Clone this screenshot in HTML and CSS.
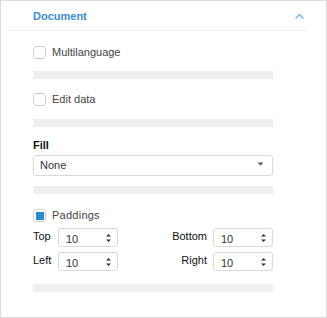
FILE: index.html
```html
<!DOCTYPE html>
<html lang="en">
<head>
    <meta charset="UTF-8" />
    <title>Document settings</title>
    <link rel="stylesheet" href="styles.css">
</head>
<body>
    <div class="panel">
        <div class="header">
            <span class="title">Document</span>
            <svg class="chevron" width="11" height="7" viewBox="0 0 11 7">
                <polyline points="1.5,5.5 5.5,1.5 9.5,5.5" fill="none" stroke="#6aaee3" stroke-width="1.1"/>
            </svg>
        </div>

        <div class="content">
            <label class="check first">
                <span class="box"></span>
                <span class="check-label">Multilanguage</span>
            </label>
            <div class="sep sep-1"></div>

            <label class="check second">
                <span class="box"></span>
                <span class="check-label">Edit data</span>
            </label>
            <div class="sep sep-2"></div>

            <div class="field-label">Fill</div>
            <div class="select">
                <span class="select-value">None</span>
                <svg width="7" height="4" viewBox="0 0 7 4">
                    <polygon points="0.5,0.5 6.5,0.5 3.5,3.5" fill="#555"/>
                </svg>
            </div>
            <div class="sep sep-3"></div>

            <label class="check third">
                <span class="box checked"><span class="mark"></span></span>
                <span class="check-label wide">Paddings</span>
            </label>

            <div class="spin-row row-1">
                <div class="spin-group">
                    <span class="spin-label left">Top</span>
                    <div class="spin"><span>10</span>
                        <svg width="7" height="12" viewBox="0 0 7 12">
                            <polygon points="1,4.5 3.5,2 6,4.5" fill="#333"/>
                            <polygon points="1,7.5 3.5,10 6,7.5" fill="#333"/>
                        </svg>
                    </div>
                </div>
                <div class="spin-group">
                    <span class="spin-label right">Bottom</span>
                    <div class="spin"><span>10</span>
                        <svg width="7" height="12" viewBox="0 0 7 12">
                            <polygon points="1,4.5 3.5,2 6,4.5" fill="#333"/>
                            <polygon points="1,7.5 3.5,10 6,7.5" fill="#333"/>
                        </svg>
                    </div>
                </div>
            </div>

            <div class="spin-row row-2">
                <div class="spin-group">
                    <span class="spin-label left">Left</span>
                    <div class="spin"><span>10</span>
                        <svg width="7" height="12" viewBox="0 0 7 12">
                            <polygon points="1,4.5 3.5,2 6,4.5" fill="#333"/>
                            <polygon points="1,7.5 3.5,10 6,7.5" fill="#333"/>
                        </svg>
                    </div>
                </div>
                <div class="spin-group">
                    <span class="spin-label right">Right</span>
                    <div class="spin"><span>10</span>
                        <svg width="7" height="12" viewBox="0 0 7 12">
                            <polygon points="1,4.5 3.5,2 6,4.5" fill="#333"/>
                            <polygon points="1,7.5 3.5,10 6,7.5" fill="#333"/>
                        </svg>
                    </div>
                </div>
            </div>
            <div class="sep sep-4"></div>
        </div>
    </div>
</body>
</html>
```

FILE: styles.css
```css
body {
    margin: 0;
    font-family: "Liberation Sans", Arial, sans-serif;
    font-size: 11px;
    color: #444;
    background: #fff;
}

.panel {
    width: 327px;
    height: 318px;
    box-sizing: border-box;
    border: 1px solid #dcdcdc;
}

.header {
    display: flex;
    align-items: center;
    justify-content: space-between;
    box-sizing: border-box;
    height: 30px;
    width: 298px;
    margin-left: 7px;
    padding-left: 25px;
    padding-right: 1px;
    border-bottom: 1px solid #ededed;
}

.title {
    color: #3a8dd3;
    font-weight: bold;
    font-size: 11px;
}

.chevron {
    margin-top: 1px;
}

.content {
    padding-left: 32px;
    width: 240px;
}

.check {
    display: flex;
    align-items: center;
    height: 13px;
    gap: 6px;
}

.check.first { margin-top: 15px; }
.check.second { margin-top: 14px; }
.check.third { margin-top: 15px; }

.box {
    width: 13px;
    height: 13px;
    box-sizing: border-box;
    border: 1px solid #cfcfcf;
    border-radius: 3px;
    display: flex;
    align-items: center;
    justify-content: center;
}

.mark {
    width: 8px;
    height: 8px;
    background: #2a8bd0;
}

.check-label {
    line-height: 13px;
}

.check-label.wide {
    letter-spacing: 0.25px;
}

.sep {
    height: 8px;
    background: #efefef;
}

.sep-1 { margin-top: 12px; }
.sep-2 { margin-top: 13px; }
.sep-3 { margin-top: 10px; }
.sep-4 { margin-top: 13px; }

.field-label {
    margin-top: 12px;
    line-height: 13px;
    font-weight: bold;
    color: #111;
}

.select {
    margin-top: 3px;
    height: 21px;
    box-sizing: border-box;
    border: 1px solid #d9d9d9;
    border-radius: 3px;
    display: flex;
    align-items: center;
    justify-content: space-between;
    padding: 0 8px 1px 6px;
    color: #333;
}

.select svg {
    margin-top: -2px;
}

.spin-row {
    display: flex;
    justify-content: space-between;
    height: 19px;
}

.row-1 { margin-top: 6px; }
.row-2 { margin-top: 5px; }

.spin-group {
    display: flex;
    align-items: center;
    gap: 6px;
}

.spin-label {
    color: #111;
    margin-top: -3px;
}

.spin-label.left {
    width: 19px;
}

.spin {
    width: 60px;
    height: 19px;
    box-sizing: border-box;
    border: 1px solid #d9d9d9;
    border-radius: 3px;
    display: flex;
    align-items: center;
    justify-content: space-between;
    padding: 2px 5px 0 7px;
    color: #333;
}

.spin svg {
    margin-top: -2px;
}
```
